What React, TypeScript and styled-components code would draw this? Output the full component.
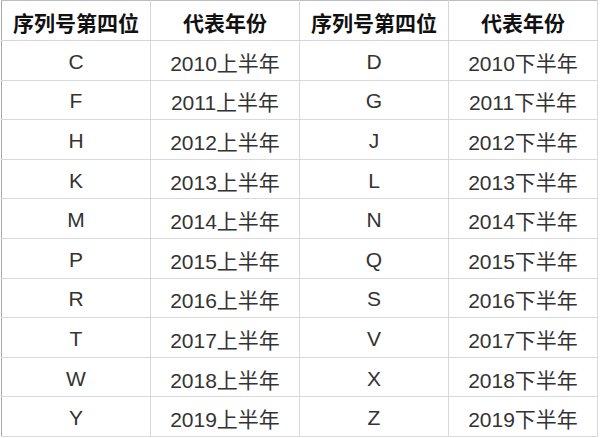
import React from "react";
import styled, { createGlobalStyle } from "styled-components";

const rows: [string, string, string, string][] = [
  ["C", "2010上半年", "D", "2010下半年"],
  ["F", "2011上半年", "G", "2011下半年"],
  ["H", "2012上半年", "J", "2012下半年"],
  ["K", "2013上半年", "L", "2013下半年"],
  ["M", "2014上半年", "N", "2014下半年"],
  ["P", "2015上半年", "Q", "2015下半年"],
  ["R", "2016上半年", "S", "2016下半年"],
  ["T", "2017上半年", "V", "2017下半年"],
  ["W", "2018上半年", "X", "2018下半年"],
  ["Y", "2019上半年", "Z", "2019下半年"],
];

const headers = ["序列号第四位", "代表年份", "序列号第四位", "代表年份"];

const App = () => {
  return (
    <Wrapper>
      <GlobalStyle />
      <Table>
        <thead>
          <HeadRow>
            {headers.map((h, i) => (
              <HeadCell key={i}>{h}</HeadCell>
            ))}
          </HeadRow>
        </thead>
        <tbody>
          {rows.map((r, i) => (
            <BodyRow key={i}>
              {r.map((c, j) => (
                <Cell key={j}>{c}</Cell>
              ))}
            </BodyRow>
          ))}
        </tbody>
      </Table>
    </Wrapper>
  );
};

const GlobalStyle = createGlobalStyle`
  html, body {
    margin: 0;
    padding: 0;
    background: #ffffff;
  }
`;

const Wrapper = styled.div`
  width: 600px;
  height: 438px;
  overflow: hidden;
  background: #ffffff;
  padding: 0 0 0 1px;
  box-sizing: border-box;
`;

const Table = styled.table`
  border-collapse: collapse;
  width: 597px;
  table-layout: fixed;
  font-family: "Liberation Sans", "Noto Sans CJK SC", sans-serif;
`;

const HeadRow = styled.tr`
  height: 40px;
`;

const BodyRow = styled.tr`
  height: 39.6px;
`;

const HeadCell = styled.th`
  border: 1px solid #d6d6d6;
  border-left-color: #a8a8a8;
  border-top-color: #bdbdbd;
  font-size: 21px;
  font-weight: bold;
  color: #111111;
  text-align: center;
  vertical-align: middle;
  padding: 3px 0 0 0;
  &:not(:first-child) {
    border-left-color: #d6d6d6;
  }
`;

const Cell = styled.td`
  border: 1px solid #d9d9d9;
  font-size: 21px;
  color: #333333;
  text-align: center;
  vertical-align: middle;
  padding: 3px 0 0 0;
  &:first-child {
    border-left-color: #a8a8a8;
  }
`;

export default App;
